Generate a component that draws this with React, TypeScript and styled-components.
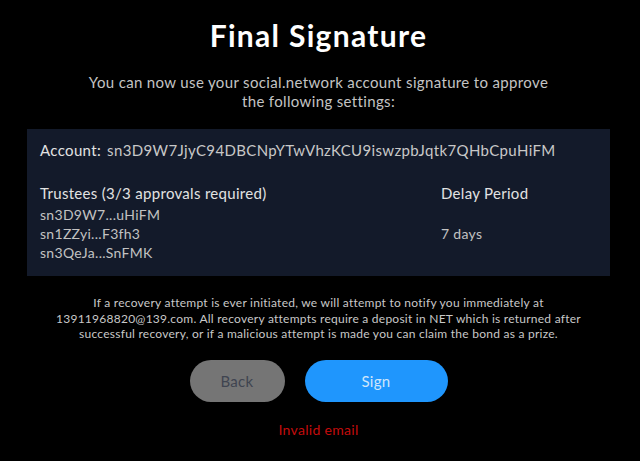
import React from 'react'
import styled, { createGlobalStyle } from 'styled-components'

const GlobalStyle = createGlobalStyle`
    html, body {
        margin: 0;
        padding: 0;
        background: #000;
    }
    body {
        font-family: 'Lato', 'Noto Sans', sans-serif;
        color: #fff;
    }
`

const Page = styled.div`
    width: 640px;
    height: 461px;
    box-sizing: border-box;
    padding: 16px 30px 0 27px;
    display: flex;
    flex-direction: column;
    align-items: center;
    background: #000;
`

const Title = styled.h1`
    margin: 0;
    font-size: 30px;
    font-weight: 700;
    line-height: 38px;
    letter-spacing: 1.3px;
    color: #fff;
`

const Subtitle = styled.p`
    margin: 19px 0 0;
    text-align: center;
    font-size: 15px;
    line-height: 19px;
    letter-spacing: 0.35px;
    color: #c4c4c4;
`

const Panel = styled.div`
    margin-top: 18px;
    align-self: stretch;
    background: #131a2a;
    padding: 11px 13px 14px;
    display: flex;
    flex-direction: column;
`

const AccountRow = styled.div`
    font-size: 15px;
    line-height: 20px;
    letter-spacing: 0.35px;
    color: #e2e2e2;
`

const AccountValue = styled.span`
    margin-left: 6px;
    color: #c8c8c8;
`

const Columns = styled.div`
    margin-top: 23px;
    display: grid;
    grid-template-columns: 401px 1fr;
    letter-spacing: 0.3px;
`

const Column = styled.div`
    display: flex;
    flex-direction: column;
`

const ColumnHead = styled.div`
    font-size: 15px;
    line-height: 20px;
    color: #e2e2e2;
    margin-bottom: 2px;
`

const ColumnItem = styled.div`
    font-size: 14px;
    line-height: 19px;
    color: #c2c2c2;
`

const Note = styled.p`
    margin: 19px 0 0;
    text-align: center;
    font-size: 12px;
    line-height: 15.5px;
    letter-spacing: 0.25px;
    color: #c8c8c8;
`

const Actions = styled.div`
    margin-top: 18px;
    display: flex;
    gap: 20px;
`

const Button = styled.button<{ $primary?: boolean }>`
    height: 42px;
    width: ${(p) => (p.$primary ? '143px' : '95px')};
    border: none;
    border-radius: 21px;
    font-family: inherit;
    font-size: 15px;
    letter-spacing: 0.3px;
    background: ${(p) => (p.$primary ? '#1f96fd' : '#757575')};
    color: ${(p) => (p.$primary ? '#cfe6fb' : '#3f4450')};
    cursor: pointer;
`

const ErrorText = styled.div`
    margin-top: 19px;
    font-size: 14px;
    line-height: 18px;
    letter-spacing: 0.3px;
    color: #c40c0c;
`

const trustees = ['sn3D9W7...uHiFM', 'sn1ZZyi...F3fh3', 'sn3QeJa...SnFMK']

export default function App() {
    return (
        <>
            <GlobalStyle />
            <Page>
                <Title>Final Signature</Title>
                <Subtitle>
                    You can now use your social.network account signature to approve
                    <br />
                    the following settings:
                </Subtitle>
                <Panel>
                    <AccountRow>
                        Account:
                        <AccountValue>
                            sn3D9W7JjyC94DBCNpYTwVhzKCU9iswzpbJqtk7QHbCpuHiFM
                        </AccountValue>
                    </AccountRow>
                    <Columns>
                        <Column>
                            <ColumnHead>Trustees (3/3 approvals required)</ColumnHead>
                            {trustees.map((t) => (
                                <ColumnItem key={t}>{t}</ColumnItem>
                            ))}
                        </Column>
                        <Column>
                            <ColumnHead>Delay Period</ColumnHead>
                            <ColumnItem>&nbsp;</ColumnItem>
                            <ColumnItem>7 days</ColumnItem>
                        </Column>
                    </Columns>
                </Panel>
                <Note>
                    If a recovery attempt is ever initiated, we will attempt to notify you immediately at
                    <br />
                    13911968820@139.com. All recovery attempts require a deposit in NET which is returned after
                    <br />
                    successful recovery, or if a malicious attempt is made you can claim the bond as a prize.
                </Note>
                <Actions>
                    <Button>Back</Button>
                    <Button $primary>Sign</Button>
                </Actions>
                <ErrorText>Invalid email</ErrorText>
            </Page>
        </>
    )
}
